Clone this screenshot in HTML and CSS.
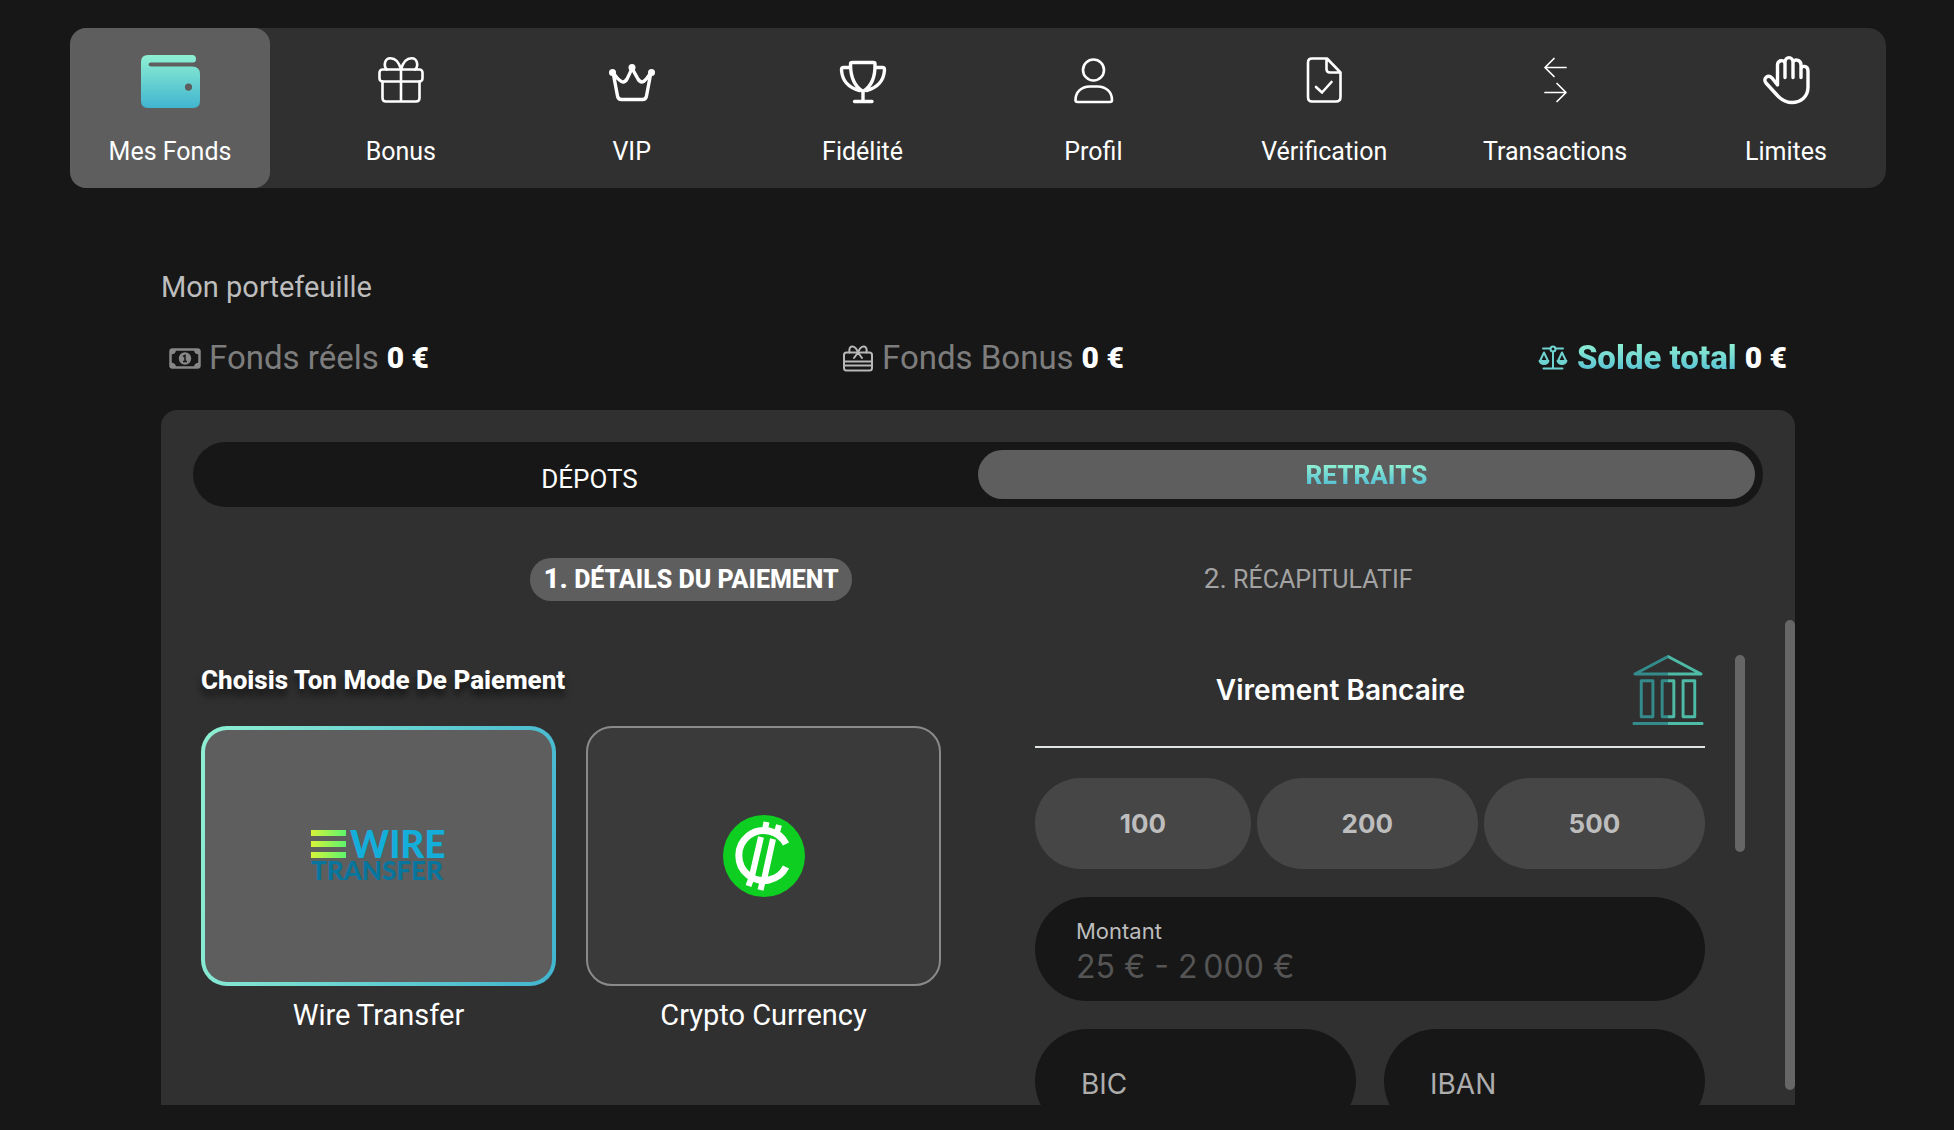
FILE: index.html
```
<!DOCTYPE html>
<html lang="fr">
<head>
    <meta charset="UTF-8">
    <meta name="viewport" content="width=device-width, initial-scale=1.0">
    <title>Mes Fonds</title>
    <link rel="stylesheet" href="styles.css">
</head>
<body>
    <nav class="menu">
        <a class="menu-item active" href="#fonds">
            <svg class="menu-icon" viewBox="0 0 64 64">
                <defs>
                    <linearGradient id="mint" x1="0" y1="0" x2="0" y2="1">
                        <stop offset="0" stop-color="#8ff0d2"/>
                        <stop offset="1" stop-color="#41b4d0"/>
                    </linearGradient>
                </defs>
                <path fill="url(#mint)" fill-rule="evenodd" d="M10 5H54Q58 5 58 9T54 12.500H13Q10.500 12.500 10.500 14.500T13 16.500H54Q62 16.500 62 24V51Q62 58 55 58H10Q3 58 3 51V12Q3 5 10 5ZM50.500 33.500A3.600 3.600 0 1 0 50.500 40.700A3.600 3.600 0 1 0 50.500 33.500Z"/>
            </svg>
            <span>Mes Fonds</span>
        </a>
        <a class="menu-item" href="#bonus">
            <svg class="menu-icon line" viewBox="0 0 64 64">
                <rect x="10.500" y="19.500" width="43" height="12" rx="3"/>
                <path d="M13.500 31.500V48Q13.500 51.500 17 51.500H47Q50.500 51.500 50.500 48V31.500M32 19.500V51.500M32 19.500C30 12 26 8.200 21.500 8.200C15 8.200 14.500 16.500 18 19.500M32 19.500C34 12 38 8.200 42.500 8.200C49 8.200 49.500 16.500 46 19.500"/>
            </svg>
            <span>Bonus</span>
        </a>
        <a class="menu-item" href="#vip">
            <svg class="menu-icon line thick" viewBox="0 0 64 64">
                <path d="M13 22L17.500 46Q18 49.500 21.500 49.500H42.500Q46 49.500 46.500 46L51 22Q47 29 43.500 31.500Q40.500 33 38 29Q34 22 32 18Q30.500 22 27 29Q24.500 33 21.500 31.500Q17 29 13 22Z"/>
                <g class="solid"><circle cx="12.500" cy="22.500" r="3.500"/><circle cx="32" cy="17.500" r="3.500"/><circle cx="51.500" cy="22.500" r="3.500"/></g>
            </svg>
            <span>VIP</span>
        </a>
        <a class="menu-item" href="#fidelite">
            <svg class="menu-icon line thick" viewBox="0 0 64 64">
                <path d="M21.500 12.500H42.500Q44 12.500 44 14Q44.500 34 32 41.500Q19.500 34 19.500 14Q19.500 12.500 21.500 12.500ZM19.500 17.500H12.500Q10.500 17.500 10.500 20Q11.500 36 28.500 40.500M44 17.500H51.500Q53.500 17.500 53.500 20Q52.500 36 35.500 40.500M32 41.500V51.500M23.500 51.500H41"/>
            </svg>
            <span>Fidélité</span>
        </a>
        <a class="menu-item" href="#profil">
            <svg class="menu-icon line" viewBox="0 0 64 64">
                <circle cx="32.500" cy="20" r="10.500"/>
                <path d="M29 36.500H36.500C45.500 36.500 51 42.500 51 50Q51 52 49 52H16.500Q14.500 52 14.500 50C14.500 42.500 20 36.500 29 36.500Z"/>
            </svg>
            <span>Profil</span>
        </a>
        <a class="menu-item" href="#verification">
            <svg class="menu-icon line" viewBox="0 0 64 64">
                <path d="M20 8.500H35L48.500 22.500V47Q48.500 51.500 44 51.500H20Q16 51.500 16 47V12.500Q16 8.500 20 8.500ZM34.500 8.500V19Q34.500 22.500 38 22.500H48.500M24 37L30 42.500L39.500 32"/>
            </svg>
            <span>Vérification</span>
        </a>
        <a class="menu-item" href="#transactions">
            <svg class="menu-icon line thin" viewBox="0 0 64 64">
                <path d="M43 17.500H22M31 8.500L22 17.500L31 26.500M22 42.500H43M34 33.500L43 42.500L34 51.500"/>
            </svg>
            <span>Transactions</span>
        </a>
        <a class="menu-item" href="#limites">
            <svg class="menu-icon line thick" viewBox="0 0 64 64">
                <path d="M23.500 29V15C23.500 9.500 30.500 9.500 31 13.500V27.500M31 12.500C31 6 39 6 39 12.500V27.500M39 12.500C39.500 8.500 47 9.500 47 15V27.500M47 19C47.500 15 54 15.500 54 21V37C54 47 46.500 52.500 38 52.500C30.500 52.500 26.500 49 22.500 44.500L12 33C8.500 28.500 14 24 18 28L23.500 35V27"/>
            </svg>
            <span>Limites</span>
        </a>
    </nav>

    <main class="wallet">
        <h1>Mon portefeuille</h1>
        <div class="funds">
            <div class="fund">
                <svg class="fund-icon" viewBox="0 0 32 32">
                    <rect x="1.500" y="7.500" width="29" height="18" rx="2" fill="none" stroke="#878787" stroke-width="2.500"/>
                    <path fill="#878787" d="M2 8H7Q7 12 2 12.500ZM30 8H25Q25 12 30 12.500ZM2 25H7Q7 21 2 20.500ZM30 25H25Q25 21 30 20.500Z"/>
                    <circle cx="16" cy="16.500" r="6.200" fill="#878787"/>
                    <path fill="none" stroke="#171717" stroke-width="1.500" d="M14 14.500L16 13.500V19.500M14 19.500H18"/>
                </svg>
                <span class="fund-name">Fonds réels</span>
                <strong>0 €</strong>
            </div>
            <div class="fund">
                <svg class="fund-icon" viewBox="0 0 32 32" fill="none" stroke="#b8b8b8" stroke-width="2" stroke-linecap="round" stroke-linejoin="round">
                    <rect x="2" y="10.500" width="28" height="18" rx="2.500"/>
                    <path d="M2 19.500H30M2 23.500H30M16 10.500C13 2 6 3 7.500 10.500M16 10.500C19 2 26 3 24.500 10.500M12 16L16 10.500L20 16"/>
                </svg>
                <span class="fund-name">Fonds Bonus</span>
                <strong>0 €</strong>
            </div>
            <div class="fund">
                <svg class="fund-icon" viewBox="0 0 32 32" fill="none" stroke="#6fd4d1" stroke-width="2" stroke-linecap="round" stroke-linejoin="round">
                    <circle cx="16" cy="7" r="2.500"/>
                    <path d="M6 6.500H13.500M18.500 6.500H26M16 9.500V26M6.500 26.500H25.500M3 19L7 10.500L11 19M21 19L25 10.500L29 19"/>
                    <path d="M2.500 19H11.500Q10.500 22 7 22T2.500 19ZM20.500 19H29.500Q28.500 22 25 22T20.500 19Z" fill="#6fd4d1"/>
                </svg>
                <span class="fund-name total">Solde total</span>
                <strong>0 €</strong>
            </div>
        </div>

        <section class="panel">
            <div class="tabs">
                <button class="tab" type="button">DÉPOTS</button>
                <button class="tab active" type="button"><span>RETRAITS</span></button>
            </div>
            <div class="steps">
                <div class="step active"><span class="step-number">1.</span> DÉTAILS DU PAIEMENT</div>
                <div class="step"><span class="step-number">2.</span> RÉCAPITULATIF</div>
            </div>

            <div class="content">
                <div class="methods">
                    <h2>Choisis Ton Mode De Paiement</h2>
                    <div class="method-list">
                        <button class="method active" type="button">
                            <span class="method-box">
                                <svg class="wire-logo" viewBox="0 0 136 54">
                                    <defs>
                                        <linearGradient id="lime" x1="0" x2="1">
                                            <stop offset="0" stop-color="#d7f23a"/>
                                            <stop offset="1" stop-color="#5df56c"/>
                                        </linearGradient>
                                    </defs>
                                    <path fill="url(#lime)" d="M0 1H35V7H0ZM0 12H35V18H0ZM0 23H35V29H0Z"/>
                                    <text x="39" y="29" font-size="37" fill="#14aedb">WIRE</text>
                                    <text x="0" y="51" font-size="26" fill="#07769e">TRANSFER</text>
                                </svg>
                            </span>
                            <span class="method-name">Wire Transfer</span>
                        </button>
                        <button class="method" type="button">
                            <span class="method-box">
                                <svg width="82" height="82" viewBox="0 0 82 82">
                                    <circle cx="41" cy="41" r="41" fill="#0fce22"/>
                                    <g fill="none" stroke="#fff">
                                        <path stroke-width="7" d="M63 29A25 25 0 1 0 63 52"/>
                                        <path stroke-width="6" d="M43.500 7L41.500 17M56 10L53.500 19M38 22L29 61M50 24L41 65M28 64L25.500 71M39.500 67L37.500 75"/>
                                    </g>
                                </svg>
                            </span>
                            <span class="method-name">Crypto Currency</span>
                        </button>
                    </div>
                </div>

                <form class="transfer">
                    <div class="transfer-head">
                        <h3>Virement Bancaire</h3>
                        <svg width="72" height="72" viewBox="0 0 74 74">
                            <defs>
                                <linearGradient id="bank" gradientUnits="userSpaceOnUse" x1="0" x2="74" y1="0" y2="0">
                                    <stop offset=".5" stop-color="#348b8b"/>
                                    <stop offset=".5" stop-color="#4dbba6"/>
                                </linearGradient>
                            </defs>
                            <path fill="none" stroke="url(#bank)" stroke-width="3" stroke-linejoin="round" d="M37 2.500L71 20.500H3ZM9.500 27.500H21.500V64.500H9.500ZM31 27.500H43V64.500H31ZM52.500 27.500H64.500V64.500H52.500ZM2 71.500H72V71.600H2Z"/>
                        </svg>
                    </div>
                    <div class="amounts">
                        <button type="button">100</button>
                        <button type="button">200</button>
                        <button type="button">500</button>
                    </div>
                    <div class="field">
                        <label for="montant">Montant</label>
                        <input id="montant" type="text" placeholder="25 € - 2&#8239;000 €">
                    </div>
                    <div class="field-row">
                        <input class="field short" type="text" aria-label="BIC" placeholder="BIC">
                        <input class="field short" type="text" aria-label="IBAN" placeholder="IBAN">
                    </div>
                    <div class="scrollbar inner"></div>
                </form>
            </div>
            <div class="scrollbar outer"></div>
        </section>
    </main>
</body>
</html>
```
FILE: styles.css
```
* {
    box-sizing: border-box;
}

body {
    display: flex;
    flex-direction: column;
    height: 100vh;
    margin: 0;
    padding: 28px 68px 25px 70px;
    overflow: hidden;
    background-color: #171717;
    color: #ffffff;
    font-family: Roboto, "Liberation Sans", sans-serif;
}

h1, h2, h3 {
    margin: 0;
}

button, input {
    border: none;
    padding: 0;
    background: none;
    color: inherit;
    font-family: inherit;
}

button {
    cursor: pointer;
}

/* top menu */
.menu {
    display: flex;
    justify-content: space-between;
    background-color: #303030;
    border-radius: 18px;
}

.menu-item {
    display: flex;
    flex-direction: column;
    align-items: center;
    gap: 22px;
    width: 200px;
    height: 160px;
    padding-top: 22px;
    border-radius: 16px;
    color: #ffffff;
    font-size: 25px;
    line-height: 32px;
    text-decoration: none;
}

.menu-item.active {
    background-color: #5e5e5e;
}

.menu-icon {
    width: 64px;
    height: 64px;
}

.line {
    fill: none;
    stroke: #ffffff;
    stroke-width: 2.6;
    stroke-linecap: round;
    stroke-linejoin: round;
}

.thick {
    stroke-width: 3.4;
}

.thin {
    stroke-width: 1.7;
}

.solid {
    fill: #ffffff;
    stroke: none;
}

/* wallet */
.wallet {
    display: flex;
    flex-direction: column;
    flex: 1;
    min-height: 0;
    margin: 0 91px;
    padding-top: 80px;
}

h1 {
    color: #bdbdbd;
    font-size: 29px;
    font-weight: 400;
    line-height: 38px;
}

.funds {
    display: flex;
    justify-content: space-between;
    padding: 31px 8px;
}

.fund {
    display: flex;
    align-items: center;
    gap: 8px;
    line-height: 42px;
}

.fund-icon {
    width: 32px;
    height: 32px;
}

.fund-name {
    color: #7d7d7d;
    font-size: 33px;
}

.fund strong {
    font-size: 30px;
    font-weight: 900;
}

.total, .tab.active span {
    background: linear-gradient(#8ff0d2 15%, #55bfd4 85%);
    background-clip: text;
    color: transparent;
    font-weight: 800;
}

.panel {
    position: relative;
    flex: 1;
    min-height: 0;
    padding: 32px 32px 0;
    overflow: hidden;
    background-color: #303030;
    border-radius: 16px 16px 0 0;
}

.tabs {
    display: flex;
    height: 65px;
    padding: 8px;
    background-color: #171717;
    border-radius: 33px;
}

.tab {
    flex: 1;
    padding-top: 8px;
    border-radius: 25px;
    font-size: 26px;
}

.tab.active {
    padding-top: 0;
    background-color: #5e5e5e;
}

.steps {
    display: flex;
    justify-content: space-around;
    margin-top: 51px;
    padding: 0 168px;
}

.step {
    padding: 0 13px;
    border-radius: 21px;
    color: #a3a3a3;
    font-size: 25px;
    line-height: 42px;
}

.step.active {
    background-color: #5e5e5e;
    color: #ffffff;
    font-weight: 800;
}

.step-number {
    font-size: 28px;
}

.content {
    display: grid;
    grid-template-columns: 740fr 670fr;
    gap: 94px;
    padding: 51px 58px 0 8px;
}

/* payment methods */
h2 {
    margin-top: 12px;
    font-size: 26px;
    font-weight: 800;
    line-height: 32px;
    text-shadow: 0 7px 7px rgba(0, 0, 0, 0.6);
}

.method-list {
    display: grid;
    grid-template-columns: 1fr 1fr;
    gap: 30px;
    margin-top: 30px;
}

.method {
    display: flex;
    flex-direction: column;
    gap: 10px;
}

.method-box {
    display: flex;
    align-items: center;
    justify-content: center;
    width: 100%;
    height: 260px;
    background-color: #3a3a3a;
    border: 2px solid #8a8a8a;
    border-radius: 26px;
}

.method.active .method-box {
    border: 4px solid transparent;
    background: linear-gradient(#5e5e5e, #5e5e5e) padding-box, linear-gradient(100deg, #8ff0d2, #41b4d0) border-box;
}

.method-name {
    width: 100%;
    font-size: 29px;
    line-height: 38px;
    text-align: center;
}

.wire-logo {
    width: 136px;
    height: 54px;
    overflow: visible;
    font-family: Lato, sans-serif;
    font-weight: 900;
}

/* bank transfer form */
.transfer {
    position: relative;
    font-family: Inter, "Liberation Sans", sans-serif;
}

.transfer-head {
    display: flex;
    align-items: center;
    padding: 2px 1px 20px 14px;
    border-bottom: 2px solid #dfe5e3;
}

h3 {
    flex: 1;
    font-size: 28px;
    font-weight: 600;
    line-height: 36px;
    text-align: center;
}

.amounts {
    display: flex;
    gap: 6px;
    margin-top: 30px;
}

.amounts button {
    flex: 1 1 auto;
    height: 91px;
    border-radius: 46px;
    background-color: #464646;
    color: #bdbdbd;
    font-size: 26px;
    font-weight: 700;
}

.field {
    display: flex;
    flex-direction: column;
    height: 104px;
    margin-top: 28px;
    padding: 20px 41px;
    background-color: #171717;
    border-radius: 52px;
}

.field label {
    color: #bdbdbd;
    font-size: 22px;
    line-height: 28px;
}

.field input {
    font-size: 32px;
    line-height: 44px;
}

.field input::placeholder {
    color: #555555;
}

.field-row {
    display: grid;
    grid-template-columns: 1fr 1fr;
    gap: 28px;
}

.short {
    min-width: 0;
    padding: 6px 46px 0;
    font-size: 28px;
}

.short::placeholder {
    color: #adadad;
}

/* scroll thumbs lie over the content */
.scrollbar {
    position: absolute;
    width: 10px;
    background-color: #666666;
    border-radius: 5px;
}

.scrollbar.outer {
    top: 210px;
    right: 0;
    bottom: 15px;
}

.scrollbar.inner {
    top: 3px;
    right: -40px;
    height: 197px;
}
```
